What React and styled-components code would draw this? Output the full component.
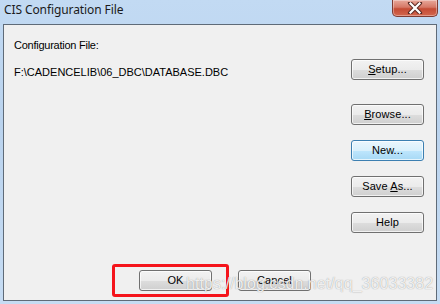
import React from 'react';
import styled, {createGlobalStyle} from 'styled-components';

const GlobalStyle = createGlobalStyle`
	html, body {
		margin: 0;
		padding: 0;
		background: #bcd4ee;
	}
`;

const Window = styled.div`
	position: relative;
	width: 440px;
	height: 304px;
	box-sizing: border-box;
	display: flex;
	flex-direction: column;
	padding: 0 3px 3px 3px;
	background: linear-gradient(180deg, #c2daf3 0%, #bad3ee 40%, #c6dcf3 100%);
	overflow: hidden;
`;

const TitleBar = styled.div`
	height: 24px;
	display: flex;
	align-items: flex-start;
	justify-content: space-between;
`;

const Title = styled.div`
	font-family: 'Noto Sans', 'Segoe UI', sans-serif;
	font-size: 12px;
	line-height: 18px;
	color: #1b1b1b;
	padding: 1px 0 0 1px;
	letter-spacing: -0.1px;
`;

const CloseButton = styled.div`
	width: 46px;
	height: 17px;
	margin-right: -1px;
	box-sizing: border-box;
	border: 1px solid #7e3b32;
	border-top: none;
	border-radius: 0 0 5px 5px;
	background: linear-gradient(180deg, #e8a89b 0%, #d67866 45%, #c44b34 55%, #d3674e 100%);
	box-shadow: inset 0 0 0 1px rgba(255, 255, 255, 0.35);
	display: flex;
	align-items: center;
	justify-content: center;
`;

const Client = styled.div`
	flex: 1;
	display: flex;
	flex-direction: column;
	background: #f0f0f0;
	border: 1px solid #5f6b78;
	font-family: 'Liberation Sans', Arial, sans-serif;
	font-size: 11px;
	color: #000;
`;

const Body = styled.div`
	display: flex;
	justify-content: space-between;
`;

const Info = styled.div`
	display: flex;
	flex-direction: column;
	gap: 14px;
	padding: 14px 0 0 10px;
`;

const Label = styled.div`
	line-height: 13px;
	letter-spacing: ${(p) => (p.$tight ? '-0.25px' : '0')};
`;

const ButtonColumn = styled.div`
	display: flex;
	flex-direction: column;
	gap: 15px;
	padding: 34px 12px 0 0;
`;

const Button = styled.div`
	width: 73px;
	height: 21px;
	box-sizing: border-box;
	margin-bottom: ${(p) => (p.$spaced ? '9px' : '0')};
	border: 1px solid ${(p) => (p.$focused ? '#3c7fb1' : '#707070')};
	border-radius: 3px;
	background: ${(p) =>
		p.$focused
			? 'linear-gradient(180deg, #eaf6fd 0%, #d9f0fc 50%, #bee6fd 51%, #a7d9f5 100%)'
			: 'linear-gradient(180deg, #f2f2f2 0%, #ebebeb 50%, #dddddd 51%, #cfcfcf 100%)'};
	box-shadow: inset 0 0 0 1px rgba(255, 255, 255, 0.7);
	display: flex;
	align-items: center;
	justify-content: center;
	font-size: 11px;
	line-height: 13px;
	letter-spacing: 0.1px;
	color: #000;
	white-space: pre;
`;

const Key = styled.span`
	text-decoration: underline;
	text-underline-offset: 1px;
`;

const Footer = styled.div`
	margin-top: auto;
	display: flex;
	gap: 26px;
	padding: 0 0 9px 135px;
`;

const Highlight = styled.div`
	position: relative;
	&::after {
		content: '';
		position: absolute;
		top: -6px;
		bottom: -6px;
		left: -27px;
		right: -17px;
		border: 3px solid #f5141b;
		border-radius: 3px;
	}
`;

const Watermark = styled.div`
	position: absolute;
	left: 186px;
	top: 275px;
	font-family: 'Liberation Sans', Arial, sans-serif;
	font-size: 16px;
	letter-spacing: 0.05px;
	white-space: nowrap;
	color: rgba(255, 255, 255, 0.85);
	text-shadow: 0 0 1px rgba(100, 100, 100, 0.7);
	pointer-events: none;
`;

const CloseIcon = () => (
	<svg width='16' height='12' viewBox='0 0 16 12'>
		<path d='M3 1 L13 11 M13 1 L3 11' stroke='#5a2a24' strokeWidth='4.2' strokeLinecap='round' />
		<path d='M3.5 1.5 L12.5 10.5 M12.5 1.5 L3.5 10.5' stroke='#ffffff' strokeWidth='2.2' strokeLinecap='square' />
	</svg>
);

const App = () => {
	return (
		<>
			<GlobalStyle />
			<Window>
				<TitleBar>
					<Title>CIS Configuration File</Title>
					<CloseButton>
						<CloseIcon />
					</CloseButton>
				</TitleBar>
				<Client>
					<Body>
						<Info>
							<Label $tight>Configuration File:</Label>
							<Label>F:\CADENCELIB\06_DBC\DATABASE.DBC</Label>
						</Info>
						<ButtonColumn>
							<Button $spaced>
								<span>
									<Key>S</Key>etup...
								</span>
							</Button>
							<Button>
								<span>
									<Key>B</Key>rowse...
								</span>
							</Button>
							<Button $focused>New...</Button>
							<Button>
								<span>
									Save <Key>A</Key>s...
								</span>
							</Button>
							<Button>Help</Button>
						</ButtonColumn>
					</Body>
					<Footer>
						<Highlight>
							<Button>OK</Button>
						</Highlight>
						<Button>Cancel</Button>
					</Footer>
				</Client>
				<Watermark>https://blog.csdn.net/qq_36033382</Watermark>
			</Window>
		</>
	);
};

export default App;
